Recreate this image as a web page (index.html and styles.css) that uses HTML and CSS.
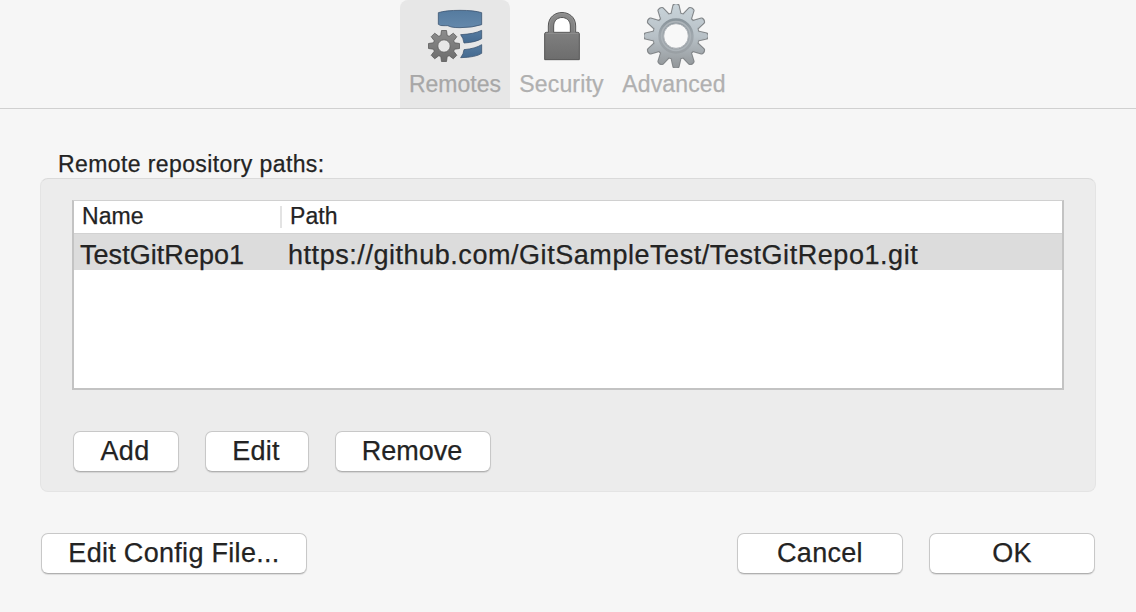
FILE: index.html
```html
<!DOCTYPE html>
<html lang="en">
<head>
<meta charset="utf-8">
<title>Repository Settings</title>
<link rel="stylesheet" href="styles.css">
</head>
<body>
<nav class="toolbar">
  <div class="tab tab-remotes active">
    <svg class="icon" width="110" height="70" viewBox="12 0 330 210">
      <defs>
        <linearGradient id="blue" x1="0" y1="0" x2="0" y2="1"><stop offset="0" stop-color="#557b9f"/><stop offset="1" stop-color="#6488ab"/></linearGradient>
        <linearGradient id="deep" x1="0" y1="0" x2="0" y2="1"><stop offset="0" stop-color="#557ba0"/><stop offset="1" stop-color="#446a90"/></linearGradient>
        <linearGradient id="gray" x1="0" y1="0" x2="0" y2="1"><stop offset="0" stop-color="#8c8c8c"/><stop offset="1" stop-color="#6d6d6d"/></linearGradient>
      </defs>
      <g stroke="#3c5672" stroke-width="2.4" stroke-linejoin="round">
        <path fill="url(#blue)" d="M127 38Q150 31 192 31T257 38V74Q230 83 192 83Q176 83 166 81Q155 75 144 77Q132 78 127 73Z"/>
        <path fill="url(#deep)" d="M194 104Q235 102 257 91V116Q238 127 204 129Q202 114 194 104Z"/>
        <path fill="url(#deep)" d="M204 149Q238 146 257 134V160Q240 172 194 173Q203 162 204 149Z"/>
      </g>
      <path transform="translate(144 138) scale(3)" fill="url(#gray)" stroke="#5a5a5a" stroke-width=".8" stroke-linejoin="round" fill-rule="evenodd" d="M-3.2-10.5L-2.5-15.5H2.5L3.2-10.5L5.2-9.7L9.3-12.8L12.8-9.3L9.7-5.2L10.5-3.2L15.5-2.5V2.5L10.5 3.2L9.7 5.2L12.8 9.3L9.3 12.8L5.2 9.7L3.2 10.5L2.5 15.5H-2.5L-3.2 10.5L-5.2 9.7L-9.3 12.8L-12.8 9.3L-9.7 5.2L-10.5 3.2L-15.5 2.5V-2.5L-10.5-3.2L-9.7-5.2L-12.8-9.3L-9.3-12.8L-5.2-9.7ZM6.2 0A6.2 6.2 0 1 0-6.2 0A6.2 6.2 0 1 0 6.2 0Z"/>
    </svg>
    <span class="tab-label">Remotes</span>
  </div>
  <div class="tab tab-security">
    <svg class="icon" width="103" height="70" viewBox="-15 0 309 210">
      <path fill="#fff" d="M116 98V78C116 44 166 44 166 78V98Z"/>
      <path fill="url(#gray)" stroke="#555" stroke-width="3" stroke-linejoin="round" d="M100 97V78C100 24 182 24 182 78V97H188Q193 97 193 102V179H89V102Q89 97 94 97ZM116 97H166V78C166 44 116 44 116 78Z" fill-rule="evenodd"/>
      <path stroke="#999" stroke-width="2" fill="none" d="M92 100H191M103 95V79C103 28 179 28 179 79V95"/>
    </svg>
    <span class="tab-label">Security</span>
  </div>
  <div class="tab tab-advanced">
    <svg class="icon" width="122" height="70" viewBox="-6 0 366 210">
      <defs>
        <linearGradient id="steel" gradientUnits="userSpaceOnUse" x1="0" y1="-32" x2="0" y2="32"><stop offset="0" stop-color="#c9d4da"/><stop offset=".5" stop-color="#b8c1c7"/><stop offset="1" stop-color="#929699"/></linearGradient>
        <linearGradient id="rim" gradientUnits="userSpaceOnUse" x1="0" y1="-18" x2="0" y2="18"><stop offset="0" stop-color="#879299"/><stop offset=".5" stop-color="#a0a8ae"/><stop offset="1" stop-color="#999fa3"/></linearGradient>
        <clipPath id="box"><rect x="-32" y="-32" width="64" height="64"/></clipPath>
        <path id="cog" d="M-4-21.8L-2-30.6Q0-32 2-30.6L4-21.8L7.4-20.9L13.6-27.5Q16-27.7 17-25.5L14.4-16.9L16.9-14.4L25.5-17Q27.7-16 27.5-13.6L20.9-7.4L21.8-4L30.6-2Q32 0 30.6 2L21.8 4L20.9 7.4L27.5 13.6Q27.7 16 25.5 17L16.9 14.4L14.4 16.9L17 25.5Q16 27.7 13.6 27.5L7.4 20.9L4 21.8L2 30.6Q0 32-2 30.6L-4 21.8L-7.4 20.9L-13.6 27.5Q-16 27.7-17 25.5L-14.4 16.9L-16.9 14.4L-25.5 17Q-27.7 16-27.5 13.6L-20.9 7.4L-21.8 4L-30.6 2Q-32 0-30.6-2L-21.8-4L-20.9-7.4L-27.5-13.6Q-27.7-16-25.5-17L-16.9-14.4L-14.4-16.9L-17-25.5Q-16-27.7-13.6-27.5L-7.4-20.9Z"/>
      </defs>
      <g transform="translate(183 108) scale(3)">
        <g clip-path="url(#box)" stroke-linejoin="round">
          <use href="#cog" fill="#84888b" stroke="#84888b" stroke-width="3.2"/>
          <use href="#cog" fill="url(#steel)" stroke="url(#steel)" stroke-width="1"/>
        </g>
        <circle r="15" fill="none" stroke="url(#rim)" stroke-width="5.4"/>
        <circle r="14.4" fill="none" stroke="#acb3b8" stroke-width="1.6"/>
        <circle r="12.3" fill="#f8f8f8" stroke="#a4aaae" stroke-width=".8"/>
      </g>
    </svg>
    <span class="tab-label">Advanced</span>
  </div>
</nav>
<main class="content">
  <div class="group-title">Remote repository paths:</div>
  <section class="group">
    <div class="table">
      <div class="row head"><div class="name">Name</div><div class="path">Path</div></div>
      <div class="row selected"><div class="name">TestGitRepo1</div><div class="path">https://github.com/GitSampleTest/TestGitRepo1.git</div></div>
    </div>
    <div class="actions">
      <button class="btn add">Add</button>
      <button class="btn edit">Edit</button>
      <button class="btn remove">Remove</button>
    </div>
  </section>
  <footer class="footer">
    <button class="btn config">Edit Config File...</button>
    <button class="btn cancel">Cancel</button>
    <button class="btn ok">OK</button>
  </footer>
</main>
</body>
</html>
```
FILE: styles.css
```css
* { box-sizing: border-box; }
body {
  margin: 0;
  height: 612px;
  overflow: hidden;
  background: #f6f6f6;
  color: #232323;
  font-family: "Liberation Sans", Arial, sans-serif;
  -webkit-text-stroke: .25px currentColor;
}
.toolbar {
  display: flex;
  height: 109px;
  padding-left: 400px;
  border-bottom: 1px solid #d0d0d0;
}
.tab {
  display: flex;
  flex-direction: column;
  align-items: center;
  height: 108px;
}
.tab-remotes { width: 110px; }
.tab-security { width: 103px; }
.tab-advanced { width: 122px; }
.tab.active { background: #e7e7e7; border-radius: 8px 8px 0 0; }
.icon { display: block; flex: none; }
.tab-label {
  font-size: 23px;
  line-height: 28px;
  letter-spacing: .15px;
  color: #b0b0b0;
}
.active .tab-label { color: #a7a7a7; letter-spacing: 0; }
.content { padding: 41px 40px 0; }
.group-title {
  height: 28px;
  padding-left: 18px;
  font-size: 23px;
  line-height: 28px;
  letter-spacing: .4px;
}
.group {
  height: 314px;
  padding: 21px 31px 0;
  background: #ececec;
  border: 1px solid #e4e4e4;
  border-top-color: #dadada;
  border-radius: 8px;
}
.table {
  height: 190px;
  background: #fff;
  border: 2px solid #c3c3c3;
  border-top: 1px solid #d0d0d0;
}
.row { display: flex; }
.head {
  height: 33px;
  border-bottom: 1px solid #d2d2d2;
  font-size: 23px;
  line-height: 31px;
  letter-spacing: .1px;
}
.head .name { width: 208px; padding-left: 8px; position: relative; }
.head .name::after {
  content: "";
  position: absolute;
  right: 0;
  top: 5px;
  width: 2px;
  height: 22px;
  background: #e3e3e3;
}
.head .path { padding-left: 8px; }
.selected {
  height: 36px;
  background: #dcdcdc;
  font-size: 27px;
  line-height: 42px;
  white-space: nowrap;
}
.selected .name { width: 208px; padding-left: 6px; letter-spacing: .05px; }
.selected .path { padding-left: 6px; letter-spacing: .55px; }
.actions { display: flex; padding: 41px 0 0 1px; }
.btn {
  height: 41px;
  padding: 0 0 1px;
  border: 1px solid #c8c8c8;
  border-bottom-color: #b0b0b0;
  border-radius: 7px;
  background: #fff;
  box-shadow: 0 1px 1px rgba(0, 0, 0, .1);
  color: #232323;
  font: 27px "Liberation Sans", Arial, sans-serif;
  letter-spacing: .3px;
}
.actions .btn { padding-right: 2px; }
.add { width: 106px; margin-right: 26px; }
.edit { width: 104px; margin-right: 26px; }
.remove { width: 156px; letter-spacing: 0; }
.footer { display: flex; padding: 41px 1px 0; }
.config { width: 266px; }
.cancel { width: 166px; margin: 0 26px 0 auto; }
.ok { width: 166px; }
```
